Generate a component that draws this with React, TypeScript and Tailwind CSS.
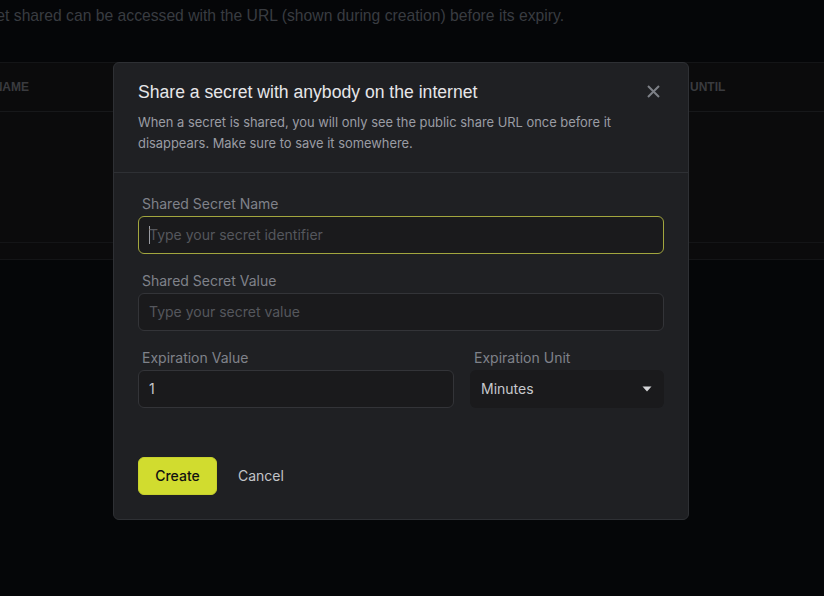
import React, { useState } from "react";

function Field({
  label,
  placeholder,
  focused,
  defaultValue,
}: {
  label: string;
  placeholder?: string;
  focused?: boolean;
  defaultValue?: string;
}) {
  return (
    <div className="flex flex-col">
      <label className="text-sm text-[#7f828a] px-1 mb-[2px] leading-5">{label}</label>
      <div
        className={`h-[38px] rounded-md bg-[#1a1a1c] border flex items-center px-[10px] ${
          focused ? "border-[#a2a63e]" : "border-[#333438]"
        }`}
      >
        {focused && <span className="w-px h-[18px] bg-[#9a9ca3] -mr-px" />}
        <input
          className="bg-transparent outline-none w-full text-sm text-[#c7c8cc] placeholder:text-[#55575d]"
          placeholder={placeholder}
          defaultValue={defaultValue}
        />
      </div>
    </div>
  );
}

export default function App() {
  const [unit] = useState("Minutes");

  return (
    <div className="relative w-[824px] h-[596px] overflow-hidden bg-[#050608] font-['Inter',sans-serif]">
      {/* page behind the overlay */}
      <div className="w-[564px] flex justify-end pt-[4px]">
        <p className="text-[15.7px] leading-6 text-[#393c41] font-['Liberation_Sans',sans-serif] whitespace-nowrap">
          Every secret shared can be accessed with the URL (shown during creation) before its expiry.
        </p>
      </div>
      <div className="mt-[34px] bg-[#0b0b0c] border-t border-[#141517]">
        <div className="h-[49px] flex items-center border-b border-[#17181a] text-xs font-bold text-[#3a3b3f] font-['Liberation_Sans',sans-serif] whitespace-nowrap">
          <div className="w-[690px] flex justify-between">
            <div className="w-[29px] flex justify-end">
              <span>NAME</span>
            </div>
            <span>VALID&nbsp;</span>
          </div>
          <span>UNTIL</span>
        </div>
        <div className="h-[131px] border-b border-[#141517]" />
        <div className="h-[17px] border-b border-[#141517]" />
      </div>

      {/* modal */}
      <div className="absolute left-[113px] top-[62px] w-[576px] h-[458px] rounded-md bg-[#1f2023] border border-[#2e3034] flex flex-col">
        <div className="relative px-6 pt-[17px] pb-[18px] border-b border-[#2e3034]">
          <h2 className="text-[17.6px] leading-6 text-[#e6e6e9] font-['Liberation_Sans',sans-serif]">
            Share a secret with anybody on the internet
          </h2>
          <p className="mt-[8px] text-[12.9px] leading-[21px] text-[#9a9ca3] pr-[40px]">
            When a secret is shared, you will only see the public share URL once before it disappears. Make sure to
            save it somewhere.
          </p>
          <button className="absolute right-[28px] top-[22px] text-[#7d8087]">
            <svg width="13" height="13" viewBox="0 0 13 13" fill="none" stroke="currentColor" strokeWidth="2">
              <path d="M1 1l11 11M12 1L1 12" />
            </svg>
          </button>
        </div>

        <div className="px-6 pt-[21px] flex flex-col gap-[17px]">
          <Field label="Shared Secret Name" placeholder="Type your secret identifier" focused />
          <Field label="Shared Secret Value" placeholder="Type your secret value" />
          <div className="flex gap-4">
            <div className="w-[316px]">
              <Field label="Expiration Value" defaultValue="1" />
            </div>
            <div className="flex-1 flex flex-col">
              <label className="text-sm text-[#7f828a] px-1 mb-[2px] leading-5">Expiration Unit</label>
              <div className="h-[38px] rounded-md bg-[#1a1a1c] flex items-center justify-between pl-[11px] pr-[12px] text-sm text-[#c7c8cc]">
                <span>{unit}</span>
                <svg width="10" height="6" viewBox="0 0 10 6" fill="#d4d5d8">
                  <path d="M0.5 0.5h9L5 5.5z" />
                </svg>
              </div>
            </div>
          </div>
        </div>

        <div className="px-6 mt-[49px] flex items-center gap-[9px]">
          <button className="h-[38px] w-[79px] rounded-md bg-[#d1dc2f] text-sm font-medium text-[#111] border border-[#c7d12c]">
            Create
          </button>
          <button className="h-[38px] px-3 text-sm text-[#c3c4c8]">Cancel</button>
        </div>
      </div>
    </div>
  );
}
